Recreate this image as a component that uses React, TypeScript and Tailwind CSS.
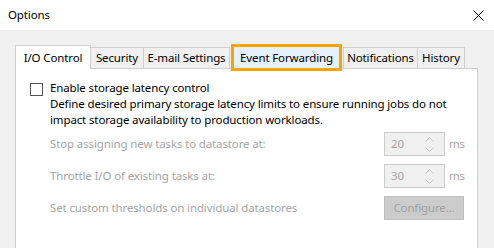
import React from "react";

const font = { fontFamily: '"Noto Sans", "Open Sans", sans-serif' };

function Spin({ value }: { value: string }) {
  return (
    <div className="flex items-center">
      <div className="flex h-[24px] w-[61px] items-center justify-between border border-[#cccccc] bg-[#f0f0f0] pl-[6px] pr-[10px]">
        <span className="text-[#a6a6a6]">{value}</span>
        <div className="flex flex-col gap-[5px]">
          <svg width="9" height="5" viewBox="0 0 9 5">
            <path d="M0.5 4.5 L4.5 0.5 L8.5 4.5" fill="none" stroke="#c4c4c4" strokeWidth="1" />
          </svg>
          <svg width="9" height="5" viewBox="0 0 9 5">
            <path d="M0.5 0.5 L4.5 4.5 L8.5 0.5" fill="none" stroke="#c4c4c4" strokeWidth="1" />
          </svg>
        </div>
      </div>
      <span className="ml-[4px] text-[#a6a6a6]">ms</span>
    </div>
  );
}

export default function App() {
  const tabs = ["Security", "E-mail Settings"];

  return (
    <div className="h-[248px] w-[494px] overflow-hidden bg-[#f0f0f0] text-[11.5px] tracking-[-0.13px] text-black" style={font}>

      <div className="flex h-[30px] items-center justify-between bg-white pl-[8px] pr-[10px]">
        <span>Options</span>
        <svg width="11" height="11" viewBox="0 0 11 11">
          <path d="M0.5 0.5 L10.5 10.5 M10.5 0.5 L0.5 10.5" stroke="#000" strokeWidth="1" />
        </svg>
      </div>

      <div className="pl-[15px] pr-[16px] pt-[15px]">

        <div className="flex h-[23px] items-end">
          <div className="relative z-10 -mb-px flex h-[24px] w-[76px] items-center justify-center border border-b-0 border-[#cfcfcf] bg-white">
            I/O Control
          </div>
          {tabs.map((t, i) => (
            <div
              key={t}
              className={
                "flex h-[21px] items-center justify-center border border-l-0 border-b-0 border-[#cfcfcf] bg-[#f0f0f0] " +
                (i === 0 ? "w-[53px]" : "w-[86px]")
              }
            >
              {t}
            </div>
          ))}
          <div className="relative z-20 mx-[4px] flex h-[21px] w-[105px] items-center justify-center bg-[#e5f1fb] outline-[3px] outline-solid outline-[#f5a500]">
            Event Forwarding
          </div>
          <div className="flex h-[21px] w-[75px] items-center justify-center border border-b-0 border-[#cfcfcf] bg-[#f0f0f0]">
            Notifications
          </div>
          <div className="flex h-[21px] w-[47px] items-center justify-center border border-l-0 border-b-0 border-[#cfcfcf] bg-[#f0f0f0]">
            History
          </div>
        </div>

        <div className="h-[200px] border border-[#cfcfcf] bg-white pl-[14px] pt-[11px]">
          <div className="flex items-start gap-[7px]">
            <div className="mt-[3px] h-[13px] w-[13px] shrink-0 border border-[#555555] bg-white" />
            <div className="leading-[16px]">
              <div>Enable storage latency control</div>
              <div>Define desired primary storage latency limits to ensure running jobs do not</div>
              <div>impact storage availability to production workloads.</div>
            </div>
          </div>

          <div className="mt-[4px] flex flex-col gap-[8px] pl-[20px] text-[#a6a6a6]">
            <div className="flex h-[24px] items-center">
              <span className="w-[334px]">Stop assigning new tasks to datastore at:</span>
              <Spin value="20" />
            </div>
            <div className="flex h-[24px] items-center">
              <span className="w-[334px]">Throttle I/O of existing tasks at:</span>
              <Spin value="30" />
            </div>
            <div className="flex h-[24px] items-center">
              <span className="w-[334px]">Set custom thresholds on individual datastores</span>
              <div className="flex h-[24px] w-[80px] items-center justify-center border border-[#bfbfbf] bg-[#cccccc] text-[#a0a0a0]">
                Configure...
              </div>
            </div>
          </div>
        </div>
      </div>
    </div>
  );
}
